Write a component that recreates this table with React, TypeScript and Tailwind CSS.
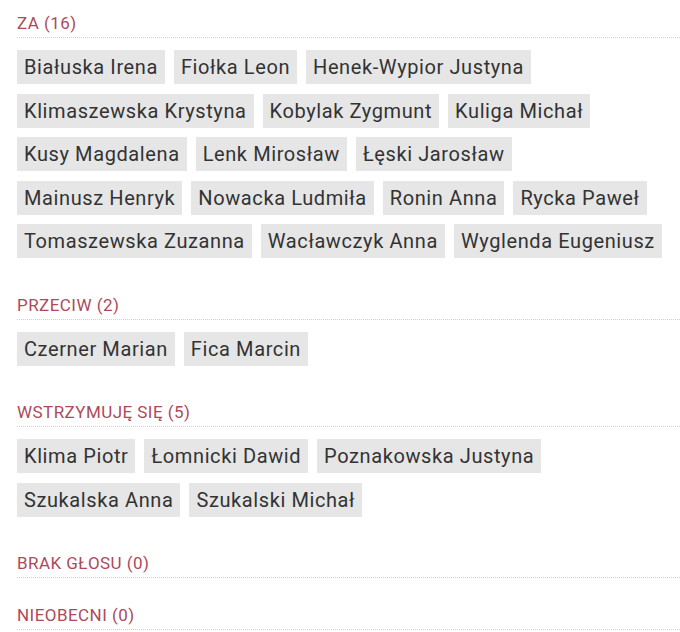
const SECTIONS = [
  {
    title: 'ZA (16)',
    names: [
      'Białuska Irena',
      'Fiołka Leon',
      'Henek-Wypior Justyna',
      'Klimaszewska Krystyna',
      'Kobylak Zygmunt',
      'Kuliga Michał',
      'Kusy Magdalena',
      'Lenk Mirosław',
      'Łęski Jarosław',
      'Mainusz Henryk',
      'Nowacka Ludmiła',
      'Ronin Anna',
      'Rycka Paweł',
      'Tomaszewska Zuzanna',
      'Wacławczyk Anna',
      'Wyglenda Eugeniusz',
    ],
  },
  { title: 'PRZECIW (2)', names: ['Czerner Marian', 'Fica Marcin'] },
  {
    title: 'WSTRZYMUJĘ SIĘ (5)',
    names: ['Klima Piotr', 'Łomnicki Dawid', 'Poznakowska Justyna', 'Szukalska Anna', 'Szukalski Michał'],
  },
  { title: 'BRAK GŁOSU (0)', names: [] },
  { title: 'NIEOBECNI (0)', names: [] },
];

export default function App() {
  return (
    <div className="min-h-screen bg-white pl-[17px] pt-[11px] font-['Roboto',sans-serif]">
      {SECTIONS.map((section) => (
        <div key={section.title} className="mb-[25px]">
          {/* Header */}
          <h3 className="border-b border-dotted border-[#cfcfcf] pb-[2px] text-[17px] leading-6 font-normal tracking-[0.45px] text-[#ad4a5a]">
            {section.title}
          </h3>

          {/* Names */}
          {section.names.length > 0 && (
            <div className="mt-3 flex flex-wrap">
              {section.names.map((name) => (
                <span
                  key={name}
                  className="mr-[9px] mb-[9.5px] h-[34px] bg-[#e6e6e6] px-[7px] text-[20px] leading-[34px] tracking-[0.6px] text-[#333333]"
                >
                  {name}
                </span>
              ))}
            </div>
          )}
        </div>
      ))}
    </div>
  );
}
